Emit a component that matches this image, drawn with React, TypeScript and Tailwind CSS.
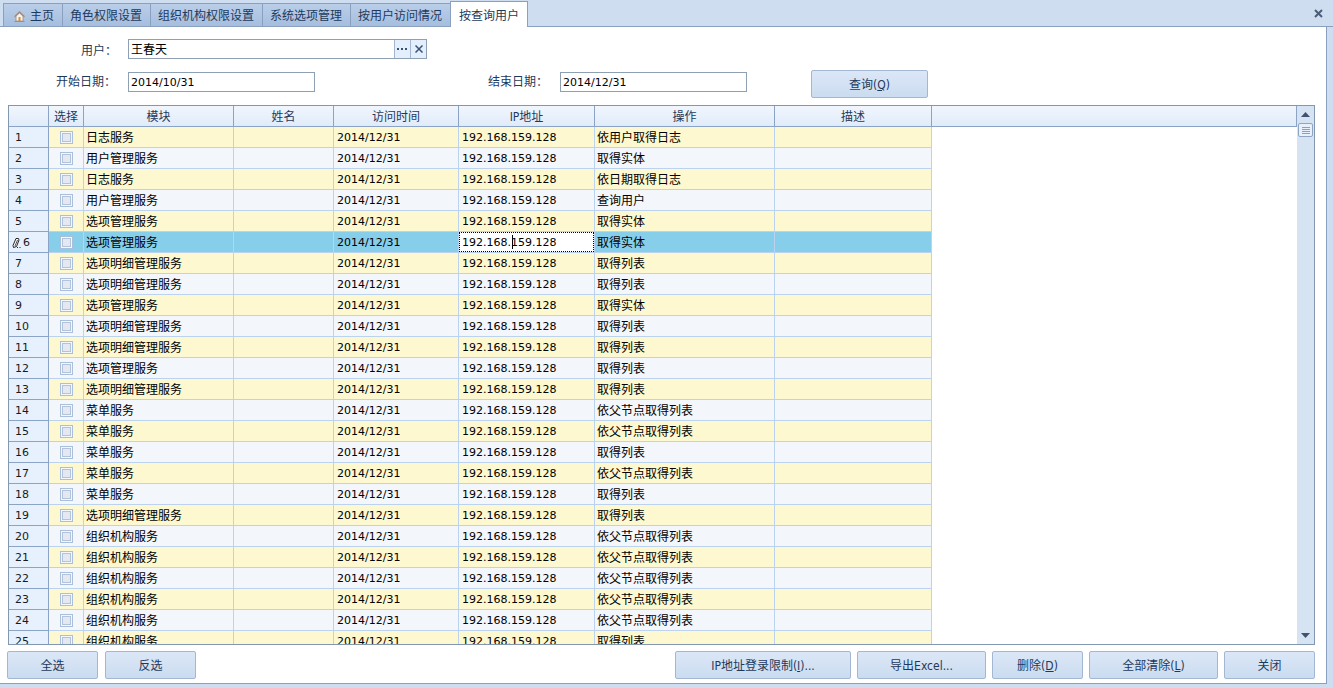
import React, { useState } from "react";

const tabs = ["角色权限设置", "组织机构权限设置", "系统选项管理", "按用户访问情况"];

const columns = [
  { title: "选择", width: 35 },
  { title: "模块", width: 150 },
  { title: "姓名", width: 100 },
  { title: "访问时间", width: 125 },
  { title: "IP地址", width: 136 },
  { title: "操作", width: 180 },
  { title: "描述", width: 157 },
];

const rows: [string, string][] = [
  ["日志服务", "依用户取得日志"],
  ["用户管理服务", "取得实体"],
  ["日志服务", "依日期取得日志"],
  ["用户管理服务", "查询用户"],
  ["选项管理服务", "取得实体"],
  ["选项管理服务", "取得实体"],
  ["选项明细管理服务", "取得列表"],
  ["选项明细管理服务", "取得列表"],
  ["选项管理服务", "取得实体"],
  ["选项明细管理服务", "取得列表"],
  ["选项明细管理服务", "取得列表"],
  ["选项管理服务", "取得列表"],
  ["选项明细管理服务", "取得列表"],
  ["菜单服务", "依父节点取得列表"],
  ["菜单服务", "依父节点取得列表"],
  ["菜单服务", "取得列表"],
  ["菜单服务", "依父节点取得列表"],
  ["菜单服务", "取得列表"],
  ["选项明细管理服务", "取得列表"],
  ["组织机构服务", "依父节点取得列表"],
  ["组织机构服务", "依父节点取得列表"],
  ["组织机构服务", "依父节点取得列表"],
  ["组织机构服务", "依父节点取得列表"],
  ["组织机构服务", "依父节点取得列表"],
  ["组织机构服务", "取得列表"],
];

const DATE = "2014/12/31";
const IP = "192.168.159.128";
const EDITED_ROW = 5;

function PushButton({ className, children }: { className: string; children: React.ReactNode }) {
  return (
    <button
      type="button"
      className={
        "h-7 shrink-0 rounded-xs border border-[#a3b7d2] bg-linear-to-b from-[#dbe7f7] to-[#cbdcf0] pt-0.5 text-center text-[#1e395b] " +
        className
      }
    >
      {children}
    </button>
  );
}

function DateField({ id, label, value }: { id: string; label: string; value: string }) {
  const [text, setText] = useState(value);
  return (
    <div className="flex items-center pt-0.5">
      <label htmlFor={id} className="w-16 whitespace-nowrap text-[#1e395b]">
        {label}
      </label>
      <input
        id={id}
        type="text"
        value={text}
        onChange={(e) => setText(e.target.value)}
        className="ml-2 h-5 w-[187px] border border-[#8f9fb4] bg-white px-0.5 pt-px font-['DejaVu_Sans',sans-serif] text-[11px] text-black outline-none"
      />
    </div>
  );
}

function HomeIcon() {
  return (
    <svg width="11" height="11" viewBox="0 0 11 11" aria-hidden="true">
      <path d="M2 5v5h7V5L5.500 2z" fill="#fbf3e4" stroke="#8d8a92" strokeWidth="0.8" />
      <path d="M0.500 5.800L5.500 1l5 4.800" fill="none" stroke="#a08c80" strokeWidth="1.300" />
      <rect x="4.500" y="6" width="2" height="4" fill="#d98c3c" />
      <path d="M0.500 10.500h10" stroke="#8a9a80" />
    </svg>
  );
}

function PencilIcon() {
  return (
    <svg width="10" height="12" viewBox="0 0 10 12" aria-hidden="true">
      <path d="M4 1.500h2.500L7 3L4.500 9.500L1.500 10.500L1 8.500z" fill="#fff" stroke="#222" strokeWidth="1" />
      <path d="M5.500 3L3 9" stroke="#222" strokeWidth="0.800" />
      <path d="M5 10.500h1M7.500 10.500h1" stroke="#222" />
    </svg>
  );
}

function GridRow({ index, module, action }: { index: number; module: string; action: string }) {
  const [ip, setIp] = useState(IP);
  const edited = index === EDITED_ROW;
  const tone = edited ? "bg-[#87ceeb]" : index % 2 === 0 ? "bg-[#fdf8cf]" : "bg-[#f3f6fb]";
  const textCell =
    "h-[21px] overflow-hidden border-r border-b border-[#bcd3f0] px-0.5 pt-0.5 pb-0 whitespace-nowrap text-black";
  const numberCell =
    "h-[21px] overflow-hidden border-r border-b border-[#bcd3f0] px-[3px] pt-0.5 pb-0 font-['DejaVu_Sans',sans-serif] text-[11px] whitespace-nowrap text-black";
  return (
    <tr className={tone}>
      <th
        scope="row"
        className="h-[21px] border-r border-b border-[#8ba3c4] bg-[#e7f1fd] p-0 pt-0.5 text-left font-['DejaVu_Sans',sans-serif] text-[11px] font-normal text-[#1a1a1a]"
      >
        {edited ? (
          <span className="flex items-center gap-px pl-[3px]">
            <PencilIcon />
            {index + 1}
          </span>
        ) : (
          <span className="pl-1.5">{index + 1}</span>
        )}
      </th>
      <td className="h-[21px] border-r border-b border-[#bcd3f0] p-0">
        <input
          type="checkbox"
          aria-label={"选择 " + (index + 1)}
          className="mx-auto block size-[13px] appearance-none border border-[#a9c0dd] bg-[#e4e8f2] shadow-[inset_0_0_0_1px_#f4f7fc,inset_0_0_0_2px_#b4c2da] checked:bg-[#6f8fbd]"
        />
      </td>
      <td className={textCell}>{module}</td>
      <td className={textCell} />
      <td className={numberCell}>{DATE}</td>
      {edited ? (
        <td className="h-[21px] border-r border-b border-[#bcd3f0] p-0">
          <div className="relative">
            <input
              type="text"
              aria-label="IP地址"
              value={ip}
              onChange={(e) => setIp(e.target.value)}
              className="block h-5 w-full border border-dotted border-black bg-white px-0.5 pt-px font-['DejaVu_Sans',sans-serif] text-[11px] text-black outline-none"
            />
            <span className="absolute top-[3px] left-[53px] h-3.5 w-px bg-black" />
          </div>
        </td>
      ) : (
        <td className={numberCell}>{IP}</td>
      )}
      <td className={textCell}>{action}</td>
      <td className={textCell} />
      <td className="bg-white p-0" />
    </tr>
  );
}

export default function App() {
  const [user, setUser] = useState("王春天");
  const headCell =
    "h-[21px] border-r border-b border-[#8ba3c4] bg-linear-to-b from-[#f1f6fd] to-[#e0ebfa] p-0 pt-0.5 text-center font-normal text-[#1e395b]";
  const tab =
    "flex h-6 items-center border-t border-b border-l border-[#8ba0bf] bg-linear-to-b from-[#bacee8] to-[#a5bedf] pt-0.5 whitespace-nowrap ";
  return (
    <div className="flex h-screen flex-col bg-[#cfddf0] font-['DejaVu_Sans_Condensed','Noto_Sans_CJK_SC',sans-serif] text-[12px] leading-4">
      <header className="flex h-[27px] shrink-0 items-end border-b border-[#8ba0bf] pl-[3px]">
        <nav className="-mb-px flex items-end text-[#1e395b]">
          <a href="#home" className={tab + "gap-[5px] pr-2 pl-2.5"}>
            <HomeIcon />
            主页
          </a>
          {tabs.map((t) => (
            <a key={t} href="#tab" className={tab + "pr-2 pl-[7px]"}>
              {t}
            </a>
          ))}
          <a
            href="#current"
            aria-current="page"
            className="flex h-[26px] items-center border-t border-r border-l border-[#8ba0bf] bg-white px-2 pt-0.5 whitespace-nowrap"
          >
            按查询用户
          </a>
        </nav>
        <button type="button" aria-label="关闭标签" className="mr-2.5 mb-2 ml-auto">
          <svg width="9" height="9" viewBox="0 0 9 9">
            <path d="M1 1l7 7M8 1L1 8" stroke="#4c5d78" strokeWidth="2" />
          </svg>
        </button>
      </header>

      <main className="mr-1.5 mb-1 flex min-h-0 flex-1 flex-col border-r border-b border-[#8ba0bf] bg-white">
        <form className="shrink-0 pt-3 pb-[7px]" onSubmit={(e) => e.preventDefault()}>
          <div className="flex items-center pl-14">
            <label htmlFor="user" className="w-16 pt-1 pl-[25px] whitespace-nowrap text-[#1e395b]">
              用户：
            </label>
            <div className="ml-2 flex h-5 w-[299px] border border-[#8f9fb4] bg-white">
              <input
                id="user"
                type="text"
                value={user}
                onChange={(e) => setUser(e.target.value)}
                className="min-w-0 flex-1 bg-transparent px-0.5 pt-0.5 text-black outline-none"
              />
              <button
                type="button"
                aria-label="浏览"
                className="flex w-4 items-center justify-center border-l border-[#a3b7d2] bg-[#e3effc]"
              >
                <svg width="11" height="2" viewBox="0 0 11 2">
                  <path d="M0 1h2M4 1h2M8 1h2" stroke="#3b5278" strokeWidth="2" />
                </svg>
              </button>
              <button
                type="button"
                aria-label="清除"
                className="flex w-4 items-center justify-center border-l border-[#a3b7d2] bg-[#e3effc]"
              >
                <svg width="8" height="8" viewBox="0 0 8 8">
                  <path d="M0.500 0.500l7 7M7.500 0.500l-7 7" stroke="#3b5278" strokeWidth="1.500" />
                </svg>
              </button>
            </div>
          </div>
          <div className="mt-[11px] flex items-start pl-14">
            <DateField id="from" label="开始日期：" value="2014/10/31" />
            <div className="w-[173px]" />
            <DateField id="to" label="结束日期：" value="2014/12/31" />
            <PushButton className="ml-16 w-[117px]">
              查询(<u>Q</u>)
            </PushButton>
          </div>
        </form>

        <section className="mr-[11px] ml-2 flex min-h-0 flex-1 border border-[#8497b1]">
          <div className="min-w-0 flex-1 overflow-hidden">
            <table className="w-full table-fixed border-separate border-spacing-0">
              <colgroup>
                <col style={{ width: 40 }} />
                {columns.map((c) => (
                  <col key={c.title} style={{ width: c.width }} />
                ))}
                <col />
              </colgroup>
              <thead>
                <tr>
                  <th className={headCell} />
                  {columns.map((c) => (
                    <th key={c.title} scope="col" className={headCell}>
                      {c.title}
                    </th>
                  ))}
                  <th className={headCell} />
                </tr>
              </thead>
              <tbody>
                {rows.map(([module, action], i) => (
                  <GridRow key={i} index={i} module={module} action={action} />
                ))}
              </tbody>
            </table>
          </div>
          <div className="flex w-[17px] shrink-0 flex-col items-center bg-[#d5e3f3]">
            <button type="button" aria-label="向上滚动" className="flex h-[17px] w-full items-center justify-center">
              <svg width="9" height="5" viewBox="0 0 9 5">
                <path d="M0 5L4.500 0L9 5z" fill="#41526e" />
              </svg>
            </button>
            <div className="flex h-3.5 w-[15px] flex-col items-center justify-center gap-px rounded-xs border border-[#8fa5c4] bg-[#e8f1fb]">
              <span className="h-px w-2 bg-[#8fa0b8]" />
              <span className="h-px w-2 bg-[#8fa0b8]" />
              <span className="h-px w-2 bg-[#8fa0b8]" />
              <span className="h-px w-2 bg-[#8fa0b8]" />
            </div>
            <button type="button" aria-label="向下滚动" className="mt-auto flex h-[17px] w-full items-center justify-center">
              <svg width="9" height="5" viewBox="0 0 9 5">
                <path d="M0 0L4.500 5L9 0z" fill="#41526e" />
              </svg>
            </button>
          </div>
        </section>

        <footer className="flex shrink-0 justify-between pt-1.5 pr-[11px] pb-1 pl-[7px]">
          <div className="flex gap-[7px]">
            <PushButton className="w-[91px]">全选</PushButton>
            <PushButton className="w-[91px]">反选</PushButton>
          </div>
          <div className="flex gap-1.5">
            <PushButton className="w-[176px]">
              IP地址登录限制(<u>I</u>)...
            </PushButton>
            <PushButton className="w-[129px]">导出Excel...</PushButton>
            <PushButton className="w-[91px]">
              删除(<u>D</u>)
            </PushButton>
            <PushButton className="w-[129px]">
              全部清除(<u>L</u>)
            </PushButton>
            <PushButton className="w-[91px]">关闭</PushButton>
          </div>
        </footer>
      </main>
    </div>
  );
}
